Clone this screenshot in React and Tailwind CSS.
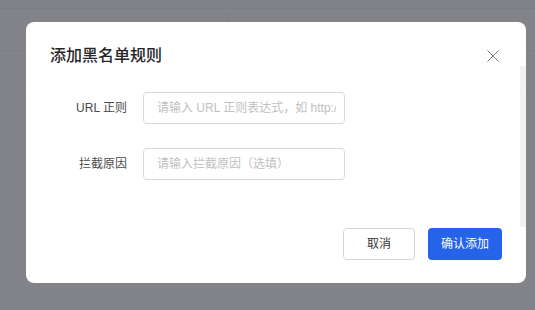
import { useState } from 'react';

const FONT = '"Liberation Sans", "Noto Sans CJK SC", sans-serif';

const FormRow = ({ label, placeholder, value, onChange }) => (
  <div className="flex items-center">
    <label className="w-[77px] text-right text-[12px] text-[#4a4a4a] mr-4">{label}</label>
    <input
      value={value}
      onChange={onChange}
      placeholder={placeholder}
      className="w-[202px] h-8 pl-[13px] pr-2 rounded border border-[#d9d9d9] text-[12px] text-[#333] placeholder:text-[#bfbfbf] outline-none"
    />
  </div>
);

export default function App() {
  const [pattern, setPattern] = useState('');
  const [reason, setReason] = useState('');

  return (
    <div className="relative w-[535px] h-[310px] overflow-hidden bg-[#838489]" style={{ fontFamily: FONT }}>
      {/* page behind the mask */}
      <div className="flex flex-col">
        <div className="h-[11px] bg-[#808186] border-b border-[#86878c]" />
        <div className="h-[40px] flex border-b border-[#7f8085]">
          <div className="w-[229px] border-r border-[#7f8085]" />
          <div className="flex-1" />
        </div>
        <div className="h-[42px] border-b border-[#7f8085]" />
      </div>

      {/* modal */}
      <div className="absolute left-[26px] top-[22px] w-[500px] h-[261px] rounded-lg bg-white flex flex-col">
        <div className="flex items-center justify-between pl-6 pr-[27px] pt-[22px]">
          <h2 className="text-[16px] leading-6 font-medium text-[#262626]">添加黑名单规则</h2>
          <button className="w-3 h-3 flex items-center justify-center text-[#777]">
            <svg width="12" height="12" viewBox="0 0 12 12" fill="none" stroke="currentColor" strokeWidth="1">
              <path d="M0.5 0.5L11.5 11.5M11.5 0.5L0.5 11.5" />
            </svg>
          </button>
        </div>

        <div className="flex flex-col gap-6 pl-6 pt-6">
          <FormRow
            label="URL 正则"
            placeholder="请输入 URL 正则表达式，如 http://example.com/.*"
            value={pattern}
            onChange={(e) => setPattern(e.target.value)}
          />
          <FormRow
            label="拦截原因"
            placeholder="请输入拦截原因（选填）"
            value={reason}
            onChange={(e) => setReason(e.target.value)}
          />
        </div>

        <div className="mt-auto flex justify-end gap-[13px] pr-6 pb-[23px]">
          <button className="w-[72px] h-8 rounded border border-[#d1d5db] bg-white text-[12px] text-[#333]">取消</button>
          <button className="w-[74px] h-8 rounded bg-[#2563eb] text-[12px] text-white">确认添加</button>
        </div>

        {/* scrollbar track */}
        <div className="absolute right-0 top-[44px] w-[6px] h-[161px] bg-[#f2f2f2]" />
      </div>
    </div>
  );
}
